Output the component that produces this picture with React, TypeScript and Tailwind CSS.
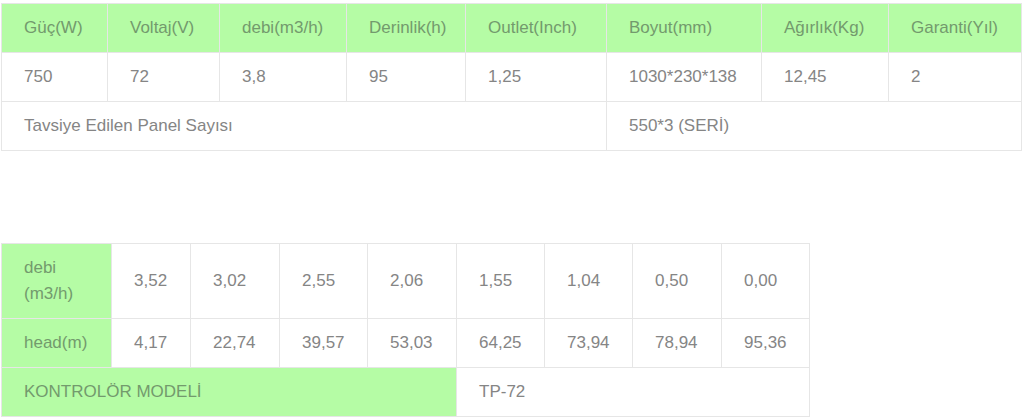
import React from "react";

const G = "bg-[#b5fca5]";
const cell = "border border-[#e6e6e6] px-[22px] py-[11px] text-left font-normal align-middle";
const headTxt = "text-[#739a6d]";
const bodyTxt = "text-[#858585]";

export default function App() {
  const heads = ["Güç(W)", "Voltaj(V)", "debi(m3/h)", "Derinlik(h)", "Outlet(Inch)", "Boyut(mm)", "Ağırlık(Kg)", "Garanti(Yıl)"];
  const vals = ["750", "72", "3,8", "95", "1,25", "1030*230*138", "12,45", "2"];
  const topW = ["w-[106px]", "w-[112px]", "w-[127px]", "w-[119px]", "w-[141px]", "w-[155px]", "w-[127px]", "w-[133px]"];
  const debi = ["3,52", "3,02", "2,55", "2,06", "1,55", "1,04", "0,50", "0,00"];
  const head = ["4,17", "22,74", "39,57", "53,03", "64,25", "73,94", "78,94", "95,36"];
  const botW = ["w-[110px]", "w-[79px]", "w-[89px]", "w-[88px]", "w-[89px]", "w-[88px]", "w-[88px]", "w-[89px]", "w-[88px]"];
  return (
    <div className="bg-white w-[1024px] h-[417px] overflow-hidden pt-[3px] pl-[1px] font-['Liberation_Sans',Arial,sans-serif] text-[17px] leading-[26px]">
      <table className="table-fixed border-collapse w-[1021px]">
        <colgroup>
          {topW.map((w, i) => (
            <col key={i} className={w} />
          ))}
        </colgroup>
        <tbody>
          <tr className={G}>
            {heads.map((h) => (
              <th key={h} className={`${cell} ${headTxt}`}>{h}</th>
            ))}
          </tr>
          <tr>
            {vals.map((v, i) => (
              <td key={i} className={`${cell} ${bodyTxt}`}>{v}</td>
            ))}
          </tr>
          <tr>
            <td colSpan={5} className={`${cell} ${bodyTxt}`}>Tavsiye Edilen Panel Sayısı</td>
            <td colSpan={3} className={`${cell} ${bodyTxt}`}>550*3 (SERİ)</td>
          </tr>
        </tbody>
      </table>
      <table className="table-fixed border-collapse w-[809px] mt-[92px]">
        <colgroup>
          {botW.map((w, i) => (
            <col key={i} className={w} />
          ))}
        </colgroup>
        <tbody>
          <tr>
            <td className={`${cell} ${G} ${headTxt}`}>debi<br />(m3/h)</td>
            {debi.map((v, i) => (
              <td key={i} className={`${cell} ${bodyTxt}`}>{v}</td>
            ))}
          </tr>
          <tr>
            <td className={`${cell} ${G} ${headTxt}`}>head(m)</td>
            {head.map((v, i) => (
              <td key={i} className={`${cell} ${bodyTxt}`}>{v}</td>
            ))}
          </tr>
          <tr>
            <td colSpan={5} className={`${cell} ${G} ${headTxt}`}>KONTROLÖR MODELİ</td>
            <td colSpan={4} className={`${cell} ${bodyTxt}`}>TP-72</td>
          </tr>
        </tbody>
      </table>
    </div>
  );
}
